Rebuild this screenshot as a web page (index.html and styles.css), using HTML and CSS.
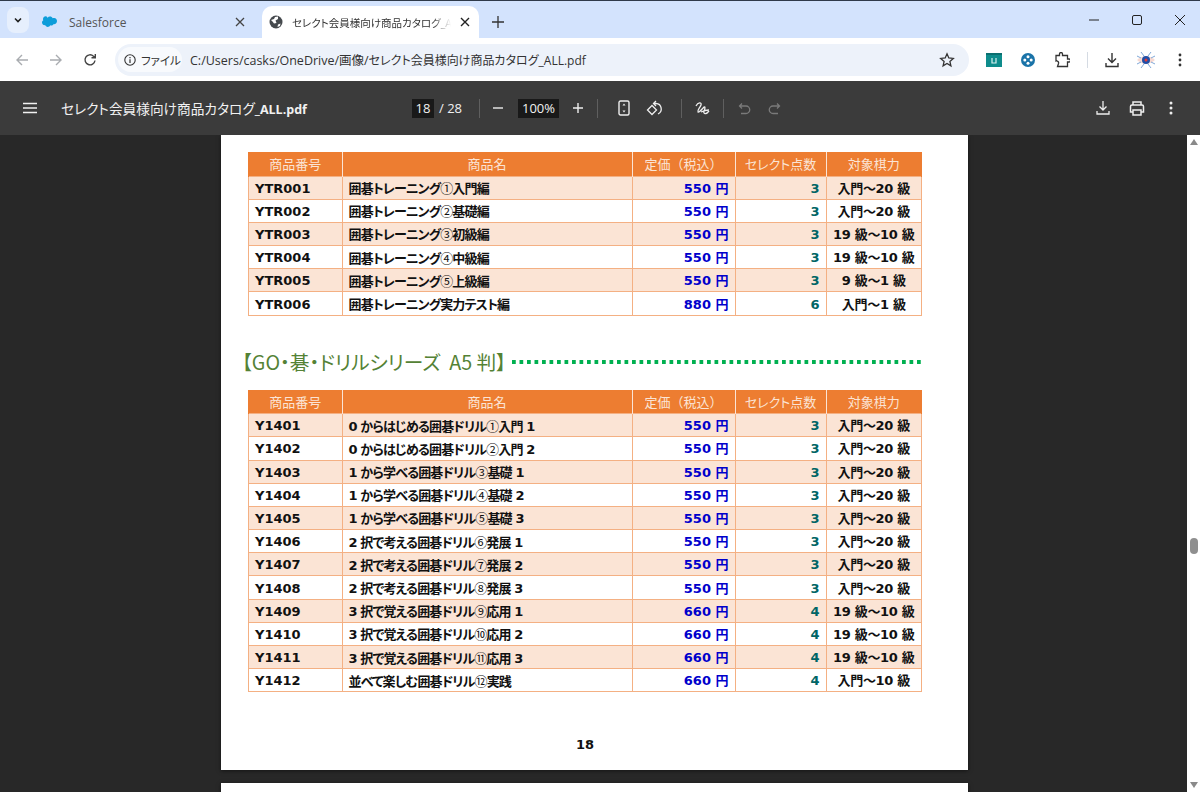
FILE: index.html
```html
<!DOCTYPE html>
<html lang="ja">
<head>
    <meta charset="UTF-8">
    <title>セレクト会員様向け商品カタログ_ALL.pdf</title>
    <link rel="stylesheet" href="styles.css">
</head>
<body>
    <div class="tabstrip">
        <button class="tab-list">
            <svg width="12" height="12" viewBox="0 0 12 12"><path d="M3 4.500 6 7.500 9 4.500" fill="none" stroke="#1f1f1f" stroke-width="1.600"/></svg>
        </button>
        <div class="tab">
            <svg width="16" height="12" viewBox="0 0 16 12"><path d="M6.600 1.700C7.200 1 8 .6 9 .6c1.200 0 2.200.7 2.700 1.600.5-.2.900-.3 1.400-.3C15 1.900 16 3.300 16 5c0 1.800-1.300 3.200-3 3.200h-.6c-.4.800-1.200 1.300-2.100 1.300-.4 0-.8-.1-1.100-.3-.4 1-1.400 1.700-2.500 1.700-1.200 0-2.200-.7-2.600-1.800-.2 0-.3.100-.5.100C2.300 9.200 1 8 1 6.500c0-1 .5-1.900 1.300-2.300C2.100 3.800 2 3.300 2 2.900 2 1.400 3.300.2 4.700.2c.8 0 1.400.6 1.900 1.500z" fill="#0d9dda"/></svg>
            <span class="tab-title">Salesforce</span>
            <svg class="tab-close" width="10" height="10" viewBox="0 0 10 10"><path d="M1 1 9 9M9 1 1 9" stroke="#444" stroke-width="1.300"/></svg>
        </div>
        <div class="tab tab-active">
            <svg width="14" height="14" viewBox="0 0 14 14"><circle cx="7" cy="7" r="6.500" fill="#45494d"/><path d="M2 5 5 4 6 2 9 1.500 9 4 6.500 5.500 7.500 8 5 8.500 3.500 6.500zM9 9.500 11.500 8.500 11 11 8.500 12z" fill="#fff"/></svg>
            <span class="tab-title tab-title-active">セレクト会員様向け商品カタログ_A</span>
            <svg class="tab-close" width="10" height="10" viewBox="0 0 10 10"><path d="M1 1 9 9M9 1 1 9" stroke="#222" stroke-width="1.400"/></svg>
        </div>
        <svg class="new-tab" width="12" height="12" viewBox="0 0 12 12"><path d="M6 0V12M0 6H12" stroke="#333" stroke-width="1.300"/></svg>
        <div class="window-controls">
            <svg width="12" height="12" viewBox="0 0 12 12"><path d="M1 6H11" stroke="#222" stroke-width="1"/></svg>
            <svg width="12" height="12" viewBox="0 0 12 12"><rect x="1.500" y="1.500" width="9" height="9" rx="1.500" fill="none" stroke="#222" stroke-width="1"/></svg>
            <svg width="12" height="12" viewBox="0 0 12 12"><path d="M1 1 11 11M11 1 1 11" stroke="#222" stroke-width="1"/></svg>
        </div>
    </div>

    <div class="addressbar">
        <button class="nav-btn"><svg width="14" height="14" viewBox="0 0 14 14"><path d="M13 7H2M7 2 2 7 7 12" fill="none" stroke="#a9acb0" stroke-width="1.400"/></svg></button>
        <button class="nav-btn"><svg width="14" height="14" viewBox="0 0 14 14"><path d="M1 7H12M7 2 12 7 7 12" fill="none" stroke="#a9acb0" stroke-width="1.400"/></svg></button>
        <button class="nav-btn"><svg width="14" height="14" viewBox="0 0 14 14"><path d="M12 7.500A5 5 0 1 1 10.500 3.200L12 4.600M12.300 1V4.800H8.500" fill="none" stroke="#444" stroke-width="1.400"/></svg></button>
        <div class="omnibox">
            <div class="site-chip">
                <svg width="12" height="12" viewBox="0 0 12 12"><circle cx="6" cy="6" r="5.200" fill="none" stroke="#333" stroke-width="1.100"/><path d="M6 5.300V9M6 3V4.200" stroke="#333" stroke-width="1.200"/></svg>
                <span>ファイル</span>
            </div>
            <span class="url">C:/Users/casks/OneDrive/画像/<span class="url-file">セレクト会員様向け商品カタログ_ALL.pdf</span></span>
            <svg class="star" width="16" height="16" viewBox="0 0 16 16"><path d="M8 1.800 9.800 6 14.300 6.400 10.900 9.400 11.900 13.900 8 11.500 4.100 13.900 5.100 9.400 1.700 6.400 6.200 6z" fill="none" stroke="#333" stroke-width="1.300"/></svg>
        </div>
        <div class="ext-icons">
            <svg width="16" height="16" viewBox="0 0 16 16"><rect y="1" width="16" height="14" fill="#0e8c8c"/><rect y="1" width="16" height="2" fill="#0b6f70"/><path d="M6 6V11H10V6" fill="none" stroke="#d8f0f0" stroke-width="1.200"/></svg>
            <svg width="16" height="16" viewBox="0 0 16 16"><circle cx="8" cy="8" r="7" fill="#1a73a8"/><circle cx="8" cy="4.800" r="1.500" fill="#fff"/><circle cx="8" cy="11.200" r="1.500" fill="#fff"/><circle cx="4.800" cy="8" r="1.500" fill="#fff"/><circle cx="11.200" cy="8" r="1.500" fill="#fff"/></svg>
            <svg width="16" height="16" viewBox="0 0 16 16"><path d="M2 3.500H5.500V2A1.500 1.500 0 0 1 8.500 2V3.500H13.500V7H15A1.500 1.500 0 0 1 15 10H13.500V14.500H3.500L4.500 11.500A2 2 0 0 0 2 9z" fill="none" stroke="#333" stroke-width="1.300"/></svg>
        </div>
        <div class="bar-sep"></div>
        <button class="nav-btn"><svg width="16" height="16" viewBox="0 0 16 16"><path d="M8 1V10M4 6.500 8 10.500 12 6.500M2 11V14.500H14V11" fill="none" stroke="#333" stroke-width="1.400"/></svg></button>
        <button class="nav-btn"><svg width="20" height="20" viewBox="0 0 20 20"><path d="M1 10Q10 2 19 10Q10 18 1 10z" fill="#f6d9d2"/><circle cx="10" cy="10" r="4" fill="#1f4fa8"/><circle cx="10" cy="10" r="1.500" fill="#e53935"/><path d="M5 2 8 6M15 2 12 6M5 18 8 14M15 18 12 14M1 6 5 8M19 6 15 8M1 14 5 12M19 14 15 12" stroke="#7fa8d8" stroke-width="1"/></svg></button>
        <button class="nav-btn"><svg width="4" height="14" viewBox="0 0 4 14"><circle cx="2" cy="2" r="1.400" fill="#333"/><circle cx="2" cy="7" r="1.400" fill="#333"/><circle cx="2" cy="12" r="1.400" fill="#333"/></svg></button>
    </div>

    <div class="pdf-toolbar">
        <button class="tool"><svg width="14" height="12" viewBox="0 0 14 12"><path d="M0 1.500H14M0 6H14M0 10.500H14" stroke="#f1f1f1" stroke-width="1.400"/></svg></button>
        <div class="pdf-title">セレクト会員様向け商品カタログ<b>_ALL.pdf</b></div>
        <div class="page-input">18</div>
        <div class="page-total">/ 28</div>
        <div class="tool-sep sep-pages"></div>
        <button class="tool tool-minus"><svg width="10" height="10" viewBox="0 0 10 10"><path d="M0 5H10" stroke="#eee" stroke-width="1.400"/></svg></button>
        <div class="zoom-input">100%</div>
        <button class="tool tool-plus"><svg width="10" height="10" viewBox="0 0 10 10"><path d="M0 5H10M5 0V10" stroke="#eee" stroke-width="1.400"/></svg></button>
        <div class="tool-sep sep-zoom"></div>
        <button class="tool tool-fit"><svg width="12" height="16" viewBox="0 0 12 16"><rect x="1" y="1" width="10" height="14" rx="1.500" fill="none" stroke="#eee" stroke-width="1.400"/><path d="M6 3.500 7.500 5.500H4.500zM6 12.500 7.500 10.500H4.500z" fill="#eee"/></svg></button>
        <button class="tool"><svg width="17" height="17" viewBox="0 0 17 17"><path d="M6 5.500 1.500 10 6 14.500 10.500 10z" fill="none" stroke="#eee" stroke-width="1.300"/><path d="M8 3.500H10A5.500 5.500 0 0 1 12 14M10 1 7.500 3.500 10 6" fill="none" stroke="#eee" stroke-width="1.300"/></svg></button>
        <div class="tool-sep sep-rotate"></div>
        <button class="tool tool-draw"><svg width="15" height="15" viewBox="0 0 15 15"><path d="M1 5C3 1 7 1 6 4 5 7 2 9 3 11 4 12 7 8 9 6 10.500 5 10 8 9 10 8 13 11 14 14 10M6 11Q10 9 14 9" fill="none" stroke="#eee" stroke-width="1.300"/></svg></button>
        <div class="tool-sep sep-draw"></div>
        <button class="tool tool-undo"><svg width="13" height="13" viewBox="0 0 13 13"><path d="M4 1.500 1.500 4 4 6.500M1.500 4H8A3.500 3.500 0 0 1 8 11.500H3" fill="none" stroke="#7a7a7a" stroke-width="1.300"/></svg></button>
        <button class="tool"><svg width="13" height="13" viewBox="0 0 13 13"><path d="M9 1.500 11.500 4 9 6.500M11.500 4H5A3.500 3.500 0 0 0 5 11.500H10" fill="none" stroke="#7a7a7a" stroke-width="1.300"/></svg></button>
        <div class="toolbar-right">
            <button class="tool"><svg width="14" height="14" viewBox="0 0 14 14"><path d="M7 0V9M3.500 5.500 7 9 10.500 5.500M1 10V13H13V10" fill="none" stroke="#eee" stroke-width="1.300"/></svg></button>
            <button class="tool"><svg width="16" height="15" viewBox="0 0 16 15"><path d="M4 4V1H12V4M4 11H1.500V5.500Q1.500 4 3 4H13Q14.500 4 14.500 5.500V11H12M4 9H12V14H4z" fill="none" stroke="#eee" stroke-width="1.500"/></svg></button>
            <button class="tool"><svg width="4" height="14" viewBox="0 0 4 14"><circle cx="2" cy="2" r="1.500" fill="#eee"/><circle cx="2" cy="7" r="1.500" fill="#eee"/><circle cx="2" cy="12" r="1.500" fill="#eee"/></svg></button>
        </div>
    </div>

    <div class="viewer">
        <div class="pages">
            <div class="page">
                <table class="catalog">
                    <thead>
                        <tr><th class="col-no">商品番号</th><th class="col-name">商品名</th><th class="col-price">定価（税込）</th><th class="col-point">セレクト点数</th><th>対象棋力</th></tr>
                    </thead>
                    <tbody>
                        <tr><td>YTR001</td><td class="name">囲碁トレーニング<i>①</i>入門編</td><td class="price">550 円</td><td class="point">3</td><td class="grade">入門～20 級</td></tr>
                        <tr><td>YTR002</td><td class="name">囲碁トレーニング<i>②</i>基礎編</td><td class="price">550 円</td><td class="point">3</td><td class="grade">入門～20 級</td></tr>
                        <tr><td>YTR003</td><td class="name">囲碁トレーニング<i>③</i>初級編</td><td class="price">550 円</td><td class="point">3</td><td class="grade">19 級～10 級</td></tr>
                        <tr><td>YTR004</td><td class="name">囲碁トレーニング<i>④</i>中級編</td><td class="price">550 円</td><td class="point">3</td><td class="grade">19 級～10 級</td></tr>
                        <tr><td>YTR005</td><td class="name">囲碁トレーニング<i>⑤</i>上級編</td><td class="price">550 円</td><td class="point">3</td><td class="grade">9 級～1 級</td></tr>
                        <tr><td>YTR006</td><td class="name">囲碁トレーニング実力テスト編</td><td class="price">880 円</td><td class="point">6</td><td class="grade">入門～1 級</td></tr>
                    </tbody>
                </table>

                <div class="series">
                    <h2>【GO・碁・ドリルシリーズ&nbsp;&nbsp;A5 判】</h2>
                    <div class="leader"></div>
                </div>

                <table class="catalog">
                    <thead>
                        <tr><th class="col-no">商品番号</th><th class="col-name">商品名</th><th class="col-price">定価（税込）</th><th class="col-point">セレクト点数</th><th>対象棋力</th></tr>
                    </thead>
                    <tbody>
                        <tr><td>Y1401</td><td class="name">0 からはじめる囲碁ドリル<i>①</i>入門 1</td><td class="price">550 円</td><td class="point">3</td><td class="grade">入門～20 級</td></tr>
                        <tr><td>Y1402</td><td class="name">0 からはじめる囲碁ドリル<i>②</i>入門 2</td><td class="price">550 円</td><td class="point">3</td><td class="grade">入門～20 級</td></tr>
                        <tr><td>Y1403</td><td class="name">1 から学べる囲碁ドリル<i>③</i>基礎 1</td><td class="price">550 円</td><td class="point">3</td><td class="grade">入門～20 級</td></tr>
                        <tr><td>Y1404</td><td class="name">1 から学べる囲碁ドリル<i>④</i>基礎 2</td><td class="price">550 円</td><td class="point">3</td><td class="grade">入門～20 級</td></tr>
                        <tr><td>Y1405</td><td class="name">1 から学べる囲碁ドリル<i>⑤</i>基礎 3</td><td class="price">550 円</td><td class="point">3</td><td class="grade">入門～20 級</td></tr>
                        <tr><td>Y1406</td><td class="name">2 択で考える囲碁ドリル<i>⑥</i>発展 1</td><td class="price">550 円</td><td class="point">3</td><td class="grade">入門～20 級</td></tr>
                        <tr><td>Y1407</td><td class="name">2 択で考える囲碁ドリル<i>⑦</i>発展 2</td><td class="price">550 円</td><td class="point">3</td><td class="grade">入門～20 級</td></tr>
                        <tr><td>Y1408</td><td class="name">2 択で考える囲碁ドリル<i>⑧</i>発展 3</td><td class="price">550 円</td><td class="point">3</td><td class="grade">入門～20 級</td></tr>
                        <tr><td>Y1409</td><td class="name">3 択で覚える囲碁ドリル<i>⑨</i>応用 1</td><td class="price">660 円</td><td class="point">4</td><td class="grade">19 級～10 級</td></tr>
                        <tr><td>Y1410</td><td class="name">3 択で覚える囲碁ドリル<i>⑩</i>応用 2</td><td class="price">660 円</td><td class="point">4</td><td class="grade">19 級～10 級</td></tr>
                        <tr><td>Y1411</td><td class="name">3 択で覚える囲碁ドリル<i>⑪</i>応用 3</td><td class="price">660 円</td><td class="point">4</td><td class="grade">19 級～10 級</td></tr>
                        <tr><td>Y1412</td><td class="name">並べて楽しむ囲碁ドリル<i>⑫</i>実践</td><td class="price">660 円</td><td class="point">4</td><td class="grade">入門～10 級</td></tr>
                    </tbody>
                </table>

                <div class="page-number">18</div>
            </div>
            <div class="page page-next"></div>
        </div>
        <div class="scrollbar">
            <div class="arrow-up"></div>
            <div class="thumb"></div>
            <div class="arrow-down"></div>
        </div>
    </div>
</body>
</html>
```

FILE: styles.css
```css
* {
    margin: 0;
    padding: 0;
    box-sizing: border-box;
}
body {
    height: 792px;
    overflow: hidden;
    background-color: #282828;
    font-family: "Open Sans", "Noto Sans CJK JP", sans-serif;
}
button {
    border: none;
    background: none;
    display: flex;
    align-items: center;
    justify-content: center;
}
svg {
    flex: none;
}

/* browser tabs */
.tabstrip {
    height: 38px;
    background-color: #d3e3fd;
    border-top: 1px solid #2f3a4a;
    display: flex;
    align-items: flex-end;
    padding-left: 7px;
}
.tab-list {
    width: 22px;
    height: 26px;
    margin-bottom: 5px;
    background-color: #e6effd;
    border-radius: 8px;
}
.tab {
    width: 229px;
    height: 32px;
    display: flex;
    align-items: center;
    padding: 0 17px 0 8px;
    margin-left: 4px;
    color: #555;
    font-size: 12px;
}
.tab-active {
    width: 217px;
    margin-left: 0;
    background-color: #fff;
    border-radius: 10px 10px 0 0;
    padding: 0 9px 0 7px;
    color: #333;
}
.tab-title {
    flex: 1;
    min-width: 0;
    margin-left: 12px;
    white-space: nowrap;
}
.tab-title-active {
    margin-left: 9px;
    margin-right: 9px;
    font-size: 10.5px;
    font-feature-settings: "palt";
    -webkit-mask-image: linear-gradient(to right, #000 88%, transparent);
    mask-image: linear-gradient(to right, #000 88%, transparent);
}
.new-tab {
    margin: 0 0 10px 13px;
}
.window-controls {
    margin-left: auto;
    align-self: center;
    display: flex;
    gap: 31px;
    padding-right: 14px;
}

/* address bar */
.addressbar {
    height: 43px;
    background-color: #fff;
    display: flex;
    align-items: center;
    padding-left: 5px;
}
.nav-btn {
    width: 34px;
    height: 30px;
    flex: none;
}
.omnibox {
    width: 854px;
    height: 32px;
    margin-left: 8px;
    background-color: #edf2fa;
    border-radius: 16px;
    display: flex;
    align-items: center;
    padding-left: 3px;
    font-size: 12.5px;
    color: #333;
    font-feature-settings: "palt";
}
.site-chip {
    width: 64px;
    height: 25px;
    background-color: #f8fafd;
    border-radius: 13px;
    display: flex;
    align-items: center;
    gap: 5px;
    padding-left: 6px;
    font-size: 11.5px;
    white-space: nowrap;
}
.url {
    margin-left: 8px;
    white-space: nowrap;
}
.url-file {
    font-size: 12px;
}
.star {
    margin-left: auto;
    margin-right: 14px;
}
.ext-icons {
    display: flex;
    gap: 18px;
    margin-left: 17px;
}
.bar-sep {
    width: 1px;
    height: 16px;
    background-color: #d5dbe3;
    margin: 0 7px 0 17px;
}

/* pdf viewer toolbar */
.pdf-toolbar {
    height: 54px;
    background-color: #3b3b3b;
    color: #f1f1f1;
    display: flex;
    align-items: center;
    padding-left: 15px;
    font-size: 13px;
}
.tool {
    width: 30px;
    height: 30px;
    flex: none;
}
.pdf-title {
    width: 351px;
    margin-left: 16px;
    font-size: 13.7px;
    font-feature-settings: "palt";
    white-space: nowrap;
}
.pdf-title b {
    font-size: 12.5px;
}
.page-input {
    width: 22px;
    height: 19px;
    background-color: #191919;
    text-align: center;
    line-height: 19px;
}
.page-total {
    width: 27px;
    margin-left: 5px;
}
.zoom-input {
    width: 41px;
    height: 19px;
    margin-left: 5px;
    background-color: #191919;
    text-align: center;
    line-height: 19px;
}
.tool-sep {
    width: 1px;
    height: 19px;
    background-color: #5f5f5f;
    flex: none;
}
.sep-pages { margin-left: 13px; }
.sep-zoom { margin-left: 4px; }
.sep-rotate { margin-left: 12px; }
.sep-draw { margin-left: 6px; }
.tool-minus { margin-left: 3px; }
.tool-plus { margin-left: 4px; }
.tool-fit { margin-left: 11px; }
.tool-draw { margin-left: 5px; }
.tool-undo { margin-left: 5px; }
.toolbar-right {
    margin-left: auto;
    padding-right: 14px;
    display: flex;
    gap: 4px;
}

/* document area */
.viewer {
    height: 657px;
    display: flex;
    overflow: hidden;
}
.pages {
    flex: 1;
    padding-left: 221px;
}
.page {
    width: 747px;
    height: 635px;
    background-color: #fff;
    padding: 17px 46px 0 27px;
    box-shadow: 0 1px 4px rgba(0, 0, 0, 0.5);
}
.page-next {
    margin-top: 13px;
}
.catalog {
    width: 674px;
    table-layout: fixed;
    border-collapse: collapse;
    font-family: "DejaVu Sans", "Noto Sans CJK JP", sans-serif;
    font-size: 13px;
    font-weight: bold;
    color: #111;
}
.catalog th {
    height: 24px;
    padding: 0;
    background-color: #ed7d31;
    color: #fbe4d5;
    font-family: "Noto Sans CJK JP", sans-serif;
    font-size: 13px;
    font-weight: normal;
    border-left: 1px solid #fbe4d5;
    border-right: 1px solid #fbe4d5;
}
.catalog th:first-child { border-left: 1px solid #ed7d31; }
.catalog th:last-child { border-right: 1px solid #ed7d31; }
.col-no { width: 93.5px; }
.col-name { width: 290px; }
.col-price { width: 103px; }
.catalog th.col-point {
    width: 91px;
    font-feature-settings: "palt";
}
.catalog td {
    height: 23.2px;
    padding: 2px 6px 0;
    border: 1px solid #f4b083;
    white-space: nowrap;
    line-height: 16px;
}
.catalog td.name {
    font-feature-settings: "palt";
    letter-spacing: -0.85px;
}
.name i {
    font-family: "Noto Sans CJK JP", sans-serif;
    font-style: normal;
    font-weight: normal;
    font-feature-settings: normal;
}
.catalog tbody tr:nth-child(odd) {
    background-color: #fbe4d5;
}
.price {
    text-align: right;
    color: #0000cc;
}
.point {
    text-align: right;
    color: #006666;
}
.catalog td.grade {
    padding: 2px 0 0;
    text-align: center;
    letter-spacing: -0.3px;
}
.series {
    height: 74px;
    padding-top: 18px;
    display: flex;
    align-items: center;
}
.series h2 {
    margin-left: -6px;
    font-family: "Noto Sans CJK JP", sans-serif;
    font-size: 19.7px;
    font-weight: normal;
    font-feature-settings: "palt";
    color: #548235;
    white-space: nowrap;
}
.leader {
    flex: 1;
    height: 4px;
    margin-left: 6px;
    background-image: linear-gradient(to right, #00b050 3.5px, transparent 3.5px);
    background-size: 7.5px 4px;
}
.page-number {
    margin-top: 45px;
    text-align: center;
    font-family: "DejaVu Sans", sans-serif;
    font-size: 13px;
    font-weight: bold;
    color: #111;
}

/* scrollbar */
.scrollbar {
    width: 13px;
    background-color: #fff;
    display: flex;
    flex-direction: column;
    align-items: center;
    padding: 4px 0;
}
.arrow-up {
    width: 0;
    height: 0;
    border-left: 4px solid transparent;
    border-right: 4px solid transparent;
    border-bottom: 6px solid #8a8a8a;
}
.thumb {
    width: 8px;
    height: 16px;
    margin-top: 393px;
    background-color: #8f8f8f;
    border-radius: 4px;
}
.arrow-down {
    width: 0;
    height: 0;
    margin-top: auto;
    border-left: 4px solid transparent;
    border-right: 4px solid transparent;
    border-top: 6px solid #8a8a8a;
}
```
